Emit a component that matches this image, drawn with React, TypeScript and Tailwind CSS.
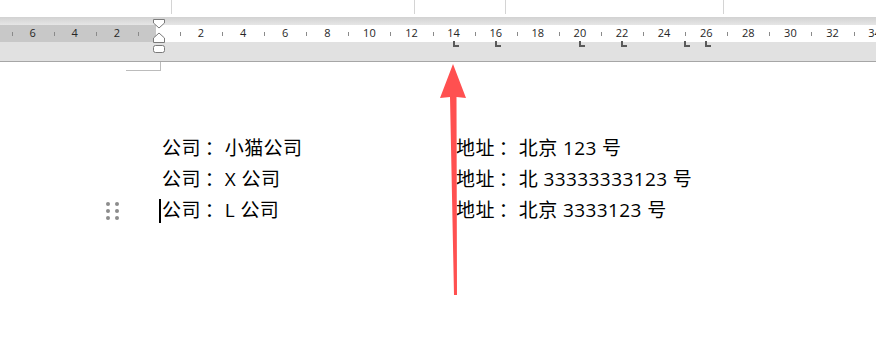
import React from "react";

const UNIT = 21.05;
const ORIGIN = 158.9;

const nums: { v: number; label: string }[] = [];
for (let i = -6; i <= 34; i += 2) {
  if (i === 0) continue;
  nums.push({ v: i, label: String(Math.abs(i)) });
}
const ticks: number[] = [];
for (let i = -7; i <= 35; i += 2) ticks.push(i);
const tabs = [14, 16, 20, 22, 25, 26];

const rows = [
  { a: ["公司", "小猫公司"], b: ["地址", "北京 123 号"] },
  { a: ["公司", "X 公司"], b: ["地址", "北 33333333123 号"] },
  { a: ["公司", "L 公司"], b: ["地址", "北京 3333123 号"] },
];

function Cell({ parts }: { parts: string[] }) {
  return (
    <>
      {parts[0]}
      <span className="inline-block w-[24px] pl-[4px]">：</span>
      {parts[1]}
    </>
  );
}

export default function App() {
  const font = { fontFamily: "'Open Sans', 'Noto Sans CJK SC', sans-serif" };
  return (
    <div className="relative w-[876px] h-[359px] overflow-hidden bg-white">
      {/* top strip with faint lines */}
      <div className="flex h-[17px]">
        <div className="w-[171px]" />
        <div className="w-px h-[14px] bg-[#d4d4d4]" />
        <div className="w-[242px]" />
        <div className="w-px h-[14px] bg-[#d4d4d4]" />
        <div className="w-[90px]" />
        <div className="w-px h-[14px] bg-[#d4d4d4]" />
        <div className="w-[217px]" />
        <div className="w-px h-[14px] bg-[#d4d4d4]" />
      </div>
      {/* gradient band */}
      <div className="h-[8px] bg-gradient-to-b from-[#d2d2d2] to-[#e6e6e6]" />
      {/* ruler */}
      <div className="relative h-[17px] flex">
        <div className="w-[156px] bg-[#c8c8c8]" />
        <div className="flex-1 bg-white" />
        {ticks.map((t) => (
          <div
            key={"t" + t}
            className="absolute top-[7px] w-px h-[4px] bg-[#8a8a8a]"
            style={{ left: Math.round(ORIGIN + t * UNIT) }}
          />
        ))}
        {nums.map((n) => (
          <div
            key={"n" + n.v}
            className="absolute top-0 h-[17px] w-[20px] -ml-[10px] flex items-center justify-center text-[11px] text-[#262626]"
            style={{ left: ORIGIN + n.v * UNIT, fontFamily: "'Open Sans', sans-serif" }}
          >
            {n.label}
          </div>
        ))}
      </div>
      {/* lower band */}
      <div className="relative h-[20px] bg-[#e1e1e1] border-b border-[#a6a6a6]">
        {tabs.map((t) => (
          <svg
            key={"tab" + t}
            className="absolute top-[-1px]"
            style={{ left: Math.round(ORIGIN + t * UNIT) - 1 }}
            width="7"
            height="6"
            viewBox="0 0 7 6"
          >
            <path d="M1 0 V5 H6" stroke="#5a5a5a" strokeWidth="2" fill="none" />
          </svg>
        ))}
      </div>
      {/* indent markers */}
      <svg className="absolute left-[152px] top-[18px]" width="14" height="36" viewBox="0 0 14 36">
        <path d="M1.5 1.5 H12.5 V5 L7 10 L1.5 5 Z" fill="#fff" stroke="#7a7a7a" strokeWidth="1" />
        <path d="M7 15 L12.5 20 V24.5 H1.5 V20 Z" fill="#fff" stroke="#7a7a7a" strokeWidth="1" />
        <rect x="1.5" y="27.5" width="11" height="7" rx="2" fill="#fff" stroke="#7a7a7a" strokeWidth="1" />
      </svg>
      {/* corner mark */}
      <div className="flex">
        <div className="w-[126px]" />
        <div className="w-[35px] h-[9px] border-b border-r border-[#bcbcbc]" />
      </div>
      {/* document content */}
      <div className="flex flex-col pt-[62px] text-[19px] tracking-[0.4px] text-black leading-[31px]" style={font}>
        {rows.map((r, i) => (
          <div key={i} className="relative flex h-[31px]">
            <div className="w-[162px] relative">
              {i === 2 && (
                <>
                  <div className="absolute left-[106px] top-[7px] grid grid-cols-2 gap-x-[5px] gap-y-[3px]">
                    {Array.from({ length: 6 }).map((_, k) => (
                      <div key={k} className="w-[4px] h-[4px] rounded-full bg-[#8c8c8c]" />
                    ))}
                  </div>
                  <div className="absolute left-[159px] top-[4px] w-[2px] h-[24px] bg-black" />
                </>
              )}
            </div>
            <div className="w-[294px] whitespace-pre">
              <Cell parts={r.a} />
            </div>
            <div className="whitespace-pre">
              <Cell parts={r.b} />
            </div>
          </div>
        ))}
      </div>
      {/* red arrow */}
      <svg className="absolute left-0 top-0" width="876" height="359" viewBox="0 0 876 359">
        <path d="M453 64 L466 98 L456.5 97 L457 295 L454 295 L450 97 L440 98 Z" fill="#ff5050" />
      </svg>
    </div>
  );
}
